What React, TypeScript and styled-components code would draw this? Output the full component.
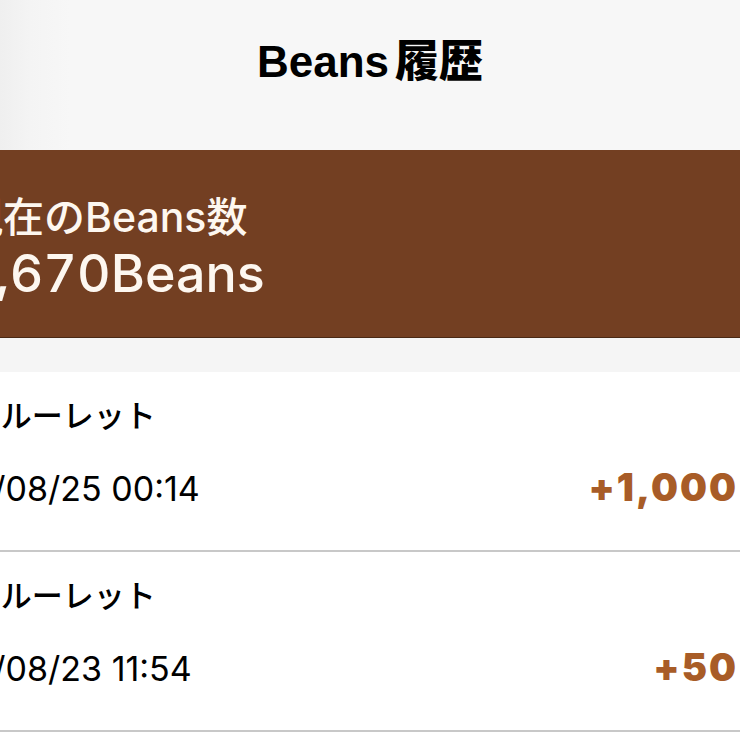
import styled, { createGlobalStyle } from 'styled-components';

const GlobalStyle = createGlobalStyle`
	html,
	body {
		margin: 0;
		padding: 0;
		background: #ffffff;
	}
	body {
		font-family: Inter, 'Noto Sans CJK JP', sans-serif;
	}
`;

const Screen = styled.div`
	width: 740px;
	height: 740px;
	overflow: hidden;
	display: flex;
	flex-direction: column;
	background: #ffffff;
`;

const Header = styled.header`
	flex-shrink: 0;
	height: 150px;
	box-sizing: border-box;
	padding-top: 40px;
	display: flex;
	justify-content: center;
	align-items: flex-start;
	background: linear-gradient(to right, #efefef 0, #f4f4f4 30px, #f7f7f7 70px);
`;

const Title = styled.h1`
	margin: 0;
	font-family: 'Liberation Sans', 'Noto Sans CJK JP', sans-serif;
	font-size: 44px;
	line-height: 44px;
	font-weight: 700;
	color: #000000;
`;

const TitleKanji = styled.span`
	margin-left: 6px;
	font-weight: 900;
`;

const Balance = styled.section`
	flex-shrink: 0;
	height: 188px;
	box-sizing: border-box;
	padding-top: 45px;
	background: #733f22;
	border-bottom: 1px solid #4a2915;
	color: #fdf7f0;
`;

// the shot is cropped on the left, so the text starts outside the frame
const BalanceText = styled.div`
	margin-left: -38px;
	white-space: nowrap;
	font-weight: 500;
`;

const BalanceLabel = styled.div`
	font-size: 41px;
	line-height: 44px;
`;

const BalanceValue = styled.div`
	font-size: 52px;
	line-height: 70px;
	font-variant-numeric: tabular-nums;
`;

const Gap = styled.div`
	flex-shrink: 0;
	height: 34px;
	background: #f5f5f5;
`;

const List = styled.ul`
	margin: 0;
	padding: 0;
	list-style: none;
	background: #ffffff;
`;

const Row = styled.li`
	height: 180px;
	box-sizing: border-box;
	padding: 24px 2px 0 0;
	border-bottom: 2px solid #c8c8c8;
`;

const RowBody = styled.div`
	margin-left: -91px;
	display: flex;
	flex-direction: column;
	gap: 31px;
`;

const RowTitle = styled.div`
	font-size: 31px;
	line-height: 40px;
	font-weight: 500;
	color: #000000;
	white-space: nowrap;
`;

const RowMeta = styled.div`
	display: flex;
	justify-content: space-between;
	align-items: baseline;
`;

const RowDate = styled.span`
	font-size: 34px;
	line-height: 40px;
	color: #000000;
	white-space: nowrap;
`;

const Amount = styled.span`
	font-size: 38px;
	line-height: 40px;
	font-weight: 900;
	letter-spacing: 2px;
	color: #a85c27;
`;

const history = [
	{ title: 'Beansルーレット', date: '2024/08/25 00:14', amount: '+1,000' },
	{ title: 'Beansルーレット', date: '2024/08/23 11:54', amount: '+50' },
];

const App = () => {
	return (
		<Screen>
			<GlobalStyle />
			<Header>
				<Title>
					Beans<TitleKanji>履歴</TitleKanji>
				</Title>
			</Header>
			<Balance>
				<BalanceText>
					<BalanceLabel>現在のBeans数</BalanceLabel>
					<BalanceValue>1,670Beans</BalanceValue>
				</BalanceText>
			</Balance>
			<Gap />
			<List>
				{history.map((item) => (
					<Row key={item.date}>
						<RowBody>
							<RowTitle>{item.title}</RowTitle>
							<RowMeta>
								<RowDate>{item.date}</RowDate>
								<Amount>{item.amount}</Amount>
							</RowMeta>
						</RowBody>
					</Row>
				))}
			</List>
		</Screen>
	);
};

export default App;
